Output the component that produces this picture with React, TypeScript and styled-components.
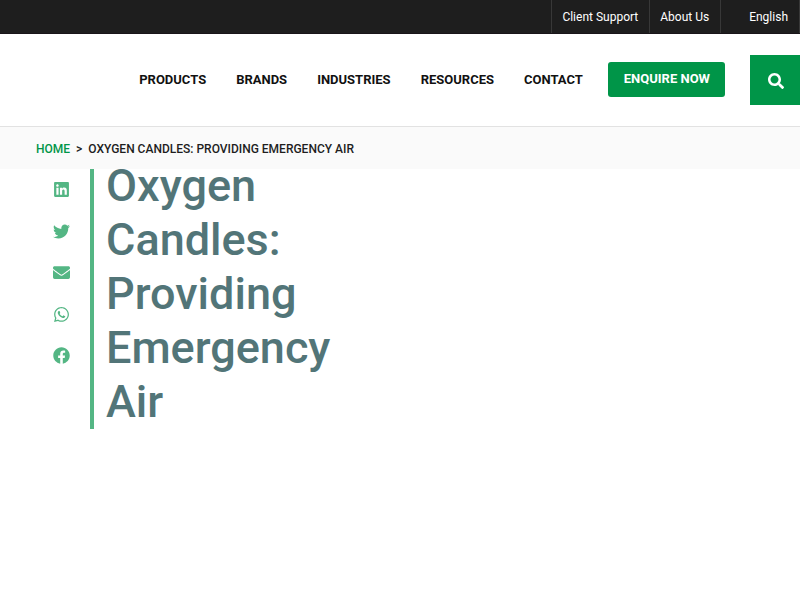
import React from "react";
import styled, { createGlobalStyle } from "styled-components";
import {
  FaEnvelope,
  FaFacebook,
  FaLinkedin,
  FaSearch,
  FaTwitter,
  FaWhatsapp,
} from "react-icons/fa";

const GlobalStyle = createGlobalStyle`
  * { box-sizing: border-box; }
  body {
    margin: 0;
    background: #fff;
    color: #1e1e1e;
    font-family: Roboto, "Liberation Sans", sans-serif;
    overflow-x: hidden;
  }
  a { color: inherit; text-decoration: none; }
`;

const Header = styled.header`
  position: relative;
  z-index: 1;
  background: #fff;
`;

const TopBar = styled.nav`
  display: flex;
  justify-content: flex-end;
  height: 34px;
  background: #1e1e1e;
  border-bottom: 1px solid #191519;
`;

const TopLink = styled.a<{ $indent?: boolean }>`
  padding: 0 11px 0 ${(p) => (p.$indent ? 28 : 10)}px;
  border-right: 1px solid #383838;
  color: #fff;
  font-size: 12px;
  line-height: 34px;

  &:first-child {
    border-left: 1px solid #383838;
  }
`;

const MainBar = styled.div`
  display: flex;
  align-items: center;
  justify-content: flex-end;
  gap: 25px;
  height: 93px;
  border-bottom: 1px solid #e2e2e2;
`;

const MainNav = styled.nav`
  display: flex;
  gap: 30px;
  font-size: 13px;
  font-weight: 700;
  line-height: 20px;
  color: #111;
`;

const EnquireLink = styled.a`
  margin-bottom: 1px;
  padding: 0 15px 1px 16px;
  border-radius: 3px;
  background: #009548;
  color: #fff;
  font-size: 13px;
  font-weight: 700;
  line-height: 34px;
`;

const SearchButton = styled.button`
  display: flex;
  align-items: center;
  justify-content: center;
  width: 50px;
  height: 50px;
  padding: 2px 0 0 2px;
  border: 0;
  background: #009548;
  color: #fff;
  font-size: 16px;
`;

const Breadcrumb = styled.nav`
  display: flex;
  gap: 6px;
  padding: 12px 36px 10px;
  background: #fafafa;
  font-size: 12px;
  font-weight: 500;
  line-height: 20px;
`;

const HomeLink = styled.a`
  color: #009548;
`;

const Article = styled.main`
  display: flex;
  align-items: flex-start;
  margin-top: -10px;
  padding-left: 36px;
`;

const ShareList = styled.div`
  display: flex;
  flex-direction: column;
  justify-content: space-between;
  align-items: center;
  width: 51px;
  height: 183px;
  margin: 22px 3px 0 0;
`;

const ShareLink = styled.a`
  display: flex;
  color: #54b684;
  font-size: 17px;
`;

const Title = styled.h1`
  width: 246px;
  margin: 0;
  padding-left: 12px;
  border-left: 4px solid #54b684;
  color: #527578;
  font-size: 45px;
  font-weight: 500;
  line-height: 54px;
`;

const navItems = ["Products", "Brands", "Industries", "Resources", "Contact"];

const shareItems = [
  { label: "LinkedIn", Icon: FaLinkedin },
  { label: "Twitter", Icon: FaTwitter },
  { label: "Email", Icon: FaEnvelope },
  { label: "WhatsApp", Icon: FaWhatsapp },
  { label: "Facebook", Icon: FaFacebook },
];

export default function App() {
  return (
    <>
      <GlobalStyle />
      <Header>
        <TopBar aria-label="Secondary">
          <TopLink href="#support">Client Support</TopLink>
          <TopLink href="#about">About Us</TopLink>
          <TopLink href="#language" $indent>
            English
          </TopLink>
        </TopBar>
        <MainBar>
          <MainNav aria-label="Main">
            {navItems.map((item) => (
              <a key={item} href={`#${item.toLowerCase()}`}>
                {item.toUpperCase()}
              </a>
            ))}
          </MainNav>
          <EnquireLink href="#enquire">ENQUIRE NOW</EnquireLink>
          <SearchButton type="button" aria-label="Search">
            <FaSearch />
          </SearchButton>
        </MainBar>
        <Breadcrumb aria-label="Breadcrumb">
          <HomeLink href="#home">HOME</HomeLink>
          <span>&gt;</span>
          <span>OXYGEN CANDLES: PROVIDING EMERGENCY AIR</span>
        </Breadcrumb>
      </Header>
      <Article>
        <ShareList>
          {shareItems.map(({ label, Icon }) => (
            <ShareLink key={label} href={`#${label.toLowerCase()}`} aria-label={label}>
              <Icon />
            </ShareLink>
          ))}
        </ShareList>
        <Title>Oxygen Candles: Providing Emergency Air</Title>
      </Article>
    </>
  );
}
